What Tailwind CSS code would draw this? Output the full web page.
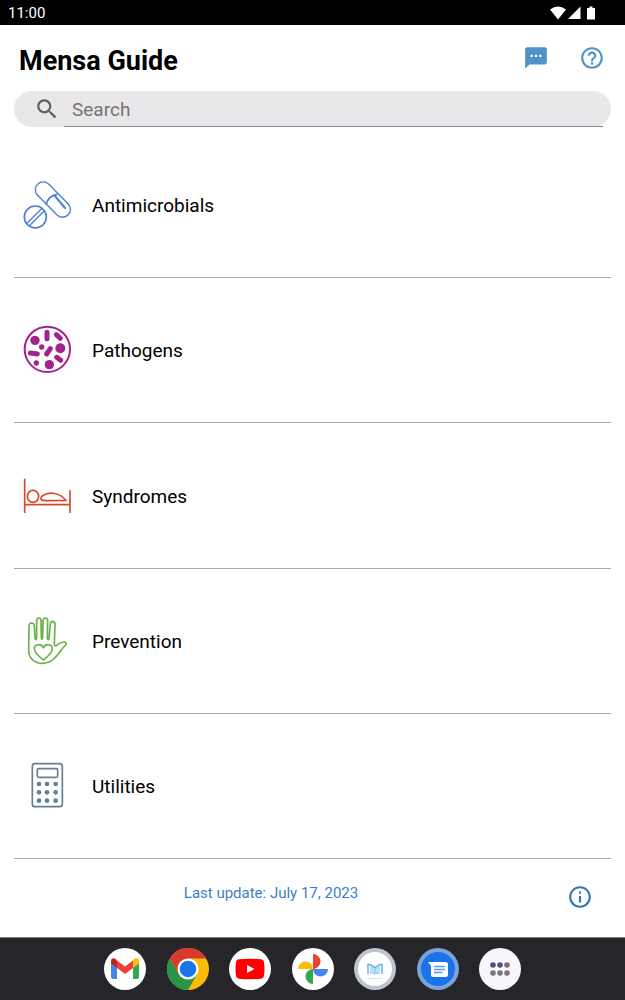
<!DOCTYPE html>
<html lang="en">
<head>
    <meta charset="UTF-8">
    <meta name="viewport" content="width=device-width, initial-scale=1.0">
    <script src="https://cdn.jsdelivr.net/npm/@tailwindcss/browser@4"></script>
    <title>Mensa Guide</title>
</head>
<body class="min-h-screen flex flex-col bg-white text-black font-['Roboto',sans-serif]">
    <!-- Status bar -->
    <div class="h-[25px] shrink-0 bg-black text-white flex items-center justify-between pl-2 pr-[27px]">
      <span class="text-[15px] leading-5">11:00</span>
      <svg class="h-4 w-12" viewBox="0 0 48 16" fill="#fff">
        <path d="M0 4.500Q8 -1.500 16 4.500L8 14.500Z"/>
        <path d="M30.500 1.500V14H18Z"/>
        <path d="M39.500 1.500h3v1.500h2.500v11.500h-8V3h2.500Z"/>
      </svg>
    </div>

    <!-- Header -->
    <header class="h-[66px] shrink-0 flex items-start justify-between pt-5 pl-[19px] pr-5">
      <h1 class="text-[27px] leading-8 font-bold">Mensa Guide</h1>
      <div class="flex gap-[30px]">
        <button type="button" aria-label="Messages">
          <svg class="size-[26px]" viewBox="0 0 24 24" fill="#4f92c6"><path d="M20 2H4c-1.100 0-2 .9-2 2v18l4-4h14c1.100 0 2-.9 2-2V4c0-1.100-.9-2-2-2zM9 11H7V9h2v2zm4 0h-2V9h2v2zm4 0h-2V9h2v2z"/></svg>
        </button>
        <button type="button" aria-label="Help">
          <svg class="size-[26px]" viewBox="0 0 24 24" fill="#4f92c6"><path d="M11 18h2v-2h-2v2zm1-16C6.480 2 2 6.480 2 12s4.480 10 10 10 10-4.480 10-10S17.520 2 12 2zm0 18c-4.410 0-8-3.590-8-8s3.590-8 8-8 8 3.590 8 8-3.590 8-8 8zm0-14c-2.210 0-4 1.790-4 4h2c0-1.100.9-2 2-2s2 .9 2 2c0 2-3 1.750-3 5h2c0-2.250 3-2.500 3-5 0-2.210-1.790-4-4-4z"/></svg>
        </button>
      </div>
    </header>

    <main class="flex-1 flex flex-col px-[14px]">
      <label class="h-9 shrink-0 mb-1.5 flex bg-[#e9e7ea] rounded-full pl-5 pr-2">
        <svg class="size-[26px] mt-[5px] mr-1" viewBox="0 0 24 24" fill="#5f5e60"><path d="M15.500 14h-.79l-.28-.27C15.410 12.590 16 11.110 16 9.500 16 5.910 13.090 3 9.500 3S3 5.910 3 9.500 5.910 16 9.500 16c1.610 0 3.090-.59 4.230-1.570l.27.28v.79l5 4.990L20.490 19l-4.990-5zm-6 0C7.010 14 5 11.990 5 9.500S7.010 5 9.500 5 14 7.010 14 9.500 11.990 14 9.500 14z"/></svg>
        <input type="text" aria-label="Search" placeholder="Search" class="flex-1 min-w-0 px-2 pt-0.5 text-[19px] leading-6 border-b border-[#8b8690] placeholder:text-[#757477] outline-none">
      </label>

      <!-- Sections -->
      <nav class="flex-1 flex flex-col text-[19px] leading-6">
        <a href="#" class="flex-1 min-h-24 flex items-center gap-[21px] pl-[9px] border-b border-[#a9a9a9]">
          <svg class="size-12 overflow-visible" viewBox="39 31 144 144" fill="none" stroke="#4a7fce" stroke-width="4">
            <path d="M80 71A24 24 0 0 1 115 39L174 99A23 23 0 0 1 141 133Z"/>
            <path d="M108 102C112 86 122 74 142 71" stroke-width="5"/>
            <path d="M134 75L165 112" stroke-width="6" stroke-linecap="round"/>
            <circle cx="76" cy="139" r="33" stroke-width="5"/>
            <path d="M51 158L97 112M58 165L103 120"/>
          </svg>
          <span class="pt-0.5">Antimicrobials</span>
        </a>
        <a href="#" class="flex-1 min-h-24 flex items-center gap-[21px] pl-[9px] border-b border-[#a9a9a9]">
          <svg class="size-12 overflow-visible" viewBox="39 33 144 144" fill="#a3238e" stroke="#a3238e" stroke-linecap="round">
            <circle cx="112" cy="103" r="68" fill="none" stroke-width="6"/>
            <g stroke="none">
              <circle cx="75" cy="76" r="14"/>
              <circle cx="151" cy="100" r="15"/>
              <circle cx="118" cy="149" r="14"/>
              <circle cx="95" cy="96" r="8"/>
              <circle cx="79" cy="144" r="8"/>
            </g>
            <path d="M111 52V71M139 59L151 70M61 114L82 117M110 117L121 101M140 127L152 136" fill="none" stroke-width="15"/>
          </svg>
          <span class="pt-0.5">Pathogens</span>
        </a>
        <a href="#" class="flex-1 min-h-24 flex items-center gap-[21px] pl-[9px] border-b border-[#a9a9a9]">
          <svg class="size-12" viewBox="39 18 144 144" fill="none" stroke="#d6492f" stroke-width="5">
            <path d="M44 38V141M180 73V141M44 116H180"/>
            <ellipse cx="69" cy="91" rx="17" ry="18"/>
            <path d="M167 103C151 80 116 76 98 89Q90 97 94 101Q97 104 110 104Z"/>
          </svg>
          <span class="pt-0.5">Syndromes</span>
        </a>
        <a href="#" class="flex-1 min-h-24 flex items-center gap-[21px] pl-[9px] border-b border-[#a9a9a9]">
          <svg class="size-12 overflow-visible" viewBox="39 35 144 144" fill="none" stroke="#67b345" stroke-width="5" stroke-linejoin="round">
            <path d="M57 62Q57 53 65 53Q72 53 73 62L75 99Q77 107 80 99V46Q80 38 87 38Q93 38 93 46L94 98Q96 106 98 98L99 46Q100 38 106 38Q113 38 113 46L112 99Q114 107 117 100L121 56Q122 48 128 48Q135 49 135 57L133 115Q133 125 140 120Q152 109 164 110Q171 112 167 119C155 130 148 143 139 153C125 171 111 174 98 174C75 174 57 160 56 137Z"/>
            <path d="M100 164C88 154 74 144 73 131C73 116 93 113 100 127C107 113 127 116 127 131C126 144 112 154 100 164Z"/>
          </svg>
          <span class="pt-0.5">Prevention</span>
        </a>
        <a href="#" class="flex-1 min-h-24 flex items-center gap-[21px] pl-[9px] border-b border-[#a9a9a9]">
          <svg class="size-12" viewBox="39 36 144 144" fill="none" stroke="#627f95" stroke-width="5">
            <rect x="67" y="41" width="90" height="129" rx="8"/>
            <rect x="82" y="56" width="61" height="26" rx="4"/>
            <g fill="#627f95" stroke="none">
              <circle cx="87" cy="102" r="7"/><circle cx="111" cy="102" r="7"/><circle cx="137" cy="102" r="7"/>
              <circle cx="87" cy="127" r="7"/><circle cx="111" cy="127" r="7"/><circle cx="137" cy="127" r="7"/>
              <circle cx="87" cy="152" r="7"/><circle cx="111" cy="152" r="7"/><circle cx="137" cy="152" r="7"/>
            </g>
          </svg>
          <span class="pt-0.5">Utilities</span>
        </a>
      </nav>
    </main>

    <footer class="h-[78px] shrink-0 flex items-start pr-8 gap-[25px] pt-[25px]">
      <p class="flex-1 text-center text-[15px] leading-[18px] text-[#3b7fc4]">Last update: July 17, 2023</p>
      <button type="button" aria-label="Information">
        <svg class="size-[26px]" viewBox="0 0 24 24" fill="#3277b3"><path d="M11 7h2v2h-2zm0 4h2v6h-2zm1-9C6.480 2 2 6.480 2 12s4.480 10 10 10 10-4.480 10-10S17.520 2 12 2zm0 18c-4.410 0-8-3.590-8-8s3.590-8 8-8 8 3.590 8 8-3.590 8-8 8z"/></svg>
      </button>
    </footer>

    <!-- Taskbar -->
    <div class="h-[63px] shrink-0 bg-[#26252a] border-t border-[#7b7b7e]">
      <div class="h-full w-full max-w-[417px] mx-auto flex items-center justify-between">
        <button type="button" aria-label="Gmail">
          <svg class="size-[42px]" viewBox="0 0 42 42">
            <circle cx="21" cy="21" r="21" fill="#fff"/>
            <path d="M7 14V29Q7 31 9 31H13V18Z" fill="#4285f4"/>
            <path d="M29 18V31H33Q35 31 35 29V14Z" fill="#34a853"/>
            <path d="M29 12.500V20L35 15.500V13C35 10 32 9.500 30 11Z" fill="#fbbc04"/>
            <path d="M13 12.500L21 18.500L29 12.500V20L21 26L13 20Z" fill="#ea4335"/>
            <path d="M7 13V15.500L13 20V12.500L11.500 11C10 9.500 7 10 7 13Z" fill="#c5221f"/>
          </svg>
        </button>
        <button type="button" aria-label="Chrome">
          <svg class="size-[42px]" viewBox="0 0 42 42">
            <circle cx="21" cy="21" r="21" fill="#fbbc04"/>
            <path d="M2.800 10.500A21 21 0 0 1 39.200 10.500H21L11.900 26.250Z" fill="#d93a2f"/>
            <path d="M2.800 10.500A21 21 0 0 0 21 42L30.100 26.250H11.900Z" fill="#2a9446"/>
            <circle cx="21" cy="21" r="10.500" fill="#fff"/>
            <circle cx="21" cy="21" r="8.300" fill="#1a73e8"/>
          </svg>
        </button>
        <button type="button" aria-label="YouTube">
          <svg class="size-[42px]" viewBox="0 0 42 42">
            <circle cx="21" cy="21" r="21" fill="#fff"/>
            <path d="M10 11.300Q21 10.300 32 11.300Q34.700 11.600 35 14Q36 21 35 28Q34.700 30.400 32 30.700Q21 31.700 10 30.700Q7.300 30.400 7 28Q6 21 7 14Q7.300 11.600 10 11.300Z" fill="#f00"/>
            <path d="M18 17V25L25.500 21Z" fill="#fff"/>
          </svg>
        </button>
        <button type="button" aria-label="Photos">
          <svg class="size-[42px]" viewBox="0 0 42 42">
            <circle cx="21" cy="21" r="21" fill="#fff"/>
            <path d="M21 6A7.500 7.500 0 0 1 21 21Z" fill="#ea4335"/>
            <path d="M36 21A7.500 7.500 0 0 1 21 21Z" fill="#4285f4"/>
            <path d="M21 36A7.500 7.500 0 0 1 21 21Z" fill="#34a853"/>
            <path d="M6 21A7.500 7.500 0 0 1 21 21Z" fill="#fbbc04"/>
          </svg>
        </button>
        <button type="button" aria-label="Mensa Guide">
          <svg class="size-[42px]" viewBox="0 0 42 42">
            <circle cx="21" cy="21" r="21" fill="#bcc4cd"/>
            <circle cx="21" cy="21" r="17" fill="#fff"/>
            <path d="M16 17L21 19.500L26 17V24.500L21 26L16 24.500Z" fill="#b9e0f7"/>
            <path d="M14 26V16.500H16L21 19.500L26 16.500H28V26" fill="none" stroke="#55aee8" stroke-width="1.400"/>
            <path d="M16 24.500L21 26L26 24.500M21 20V26" fill="none" stroke="#8cc8ef" stroke-width="1"/>
            <path d="M13 30.500H29" stroke="#e3e3e6" stroke-width="1"/>
          </svg>
        </button>
        <button type="button" aria-label="Chat">
          <svg class="size-[42px]" viewBox="0 0 42 42">
            <circle cx="21" cy="21" r="21" fill="#7da3d9"/>
            <circle cx="21" cy="21" r="17" fill="#1a73e8"/>
            <path d="M11 14H28.500Q31 14 31 16.500V26.500Q31 29 28.500 29H16.500Q14 29 14 26.500V18Z" fill="#fff"/>
            <path d="M17 18.500H28M17 21.500H28M17 24.500H25.500" stroke="#5b9bf0" stroke-width="1.300"/>
          </svg>
        </button>
        <button type="button" aria-label="All apps">
          <svg class="size-[42px]" viewBox="0 0 42 42">
            <circle cx="21" cy="21" r="21" fill="#f9f7fd"/>
            <circle cx="14" cy="17" r="2.800" fill="#50507f"/>
            <circle cx="21" cy="17" r="2.800" fill="#4e4f93"/>
            <circle cx="28" cy="17" r="2.800" fill="#8a6873"/>
            <circle cx="14" cy="25" r="2.800" fill="#77777c"/>
            <circle cx="21" cy="25" r="2.800" fill="#77777c"/>
            <circle cx="28" cy="25" r="2.800" fill="#77777c"/>
          </svg>
        </button>
      </div>
    </div>
</body>
</html>
